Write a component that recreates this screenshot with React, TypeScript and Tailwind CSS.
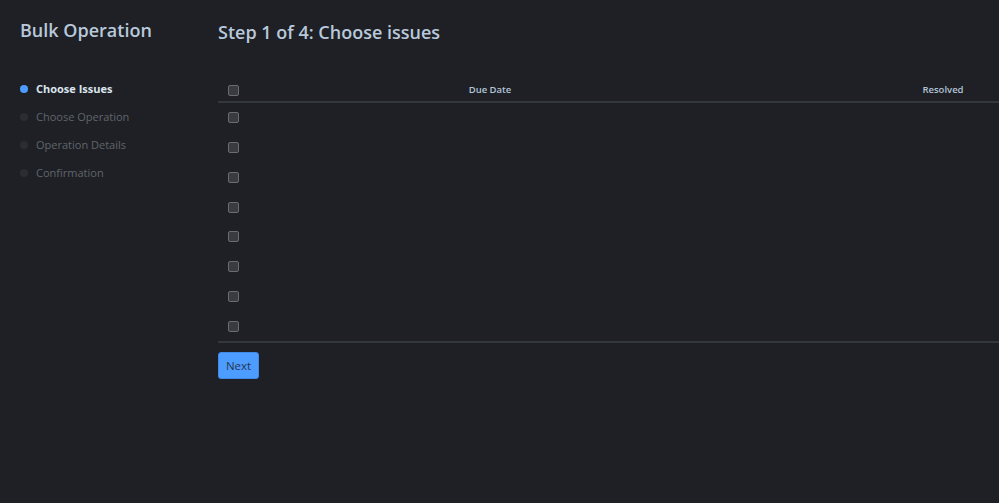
const steps = ["Choose Issues", "Choose Operation", "Operation Details", "Confirmation"];

function Checkbox() {
    return <span className="block h-[11px] w-[11px] rounded-[2px] border border-[#6a6c70] bg-[#3a3b3e]" />;
}

export default function App() {
    const rows = Array.from({ length: 8 }, (_, i) => i);

    return (
        <div
            className="flex h-[503px] w-[999px] overflow-hidden bg-[#1e2025] text-[#b9c8d8]"
            style={{ fontFamily: '"Open Sans", "Noto Sans", sans-serif' }}
        >
            <aside className="w-[218px] shrink-0 pl-5 pt-[16px]">
                <h1 className="text-[18px] font-semibold leading-[28px] text-[#b9c9db]">Bulk Operation</h1>
                <ul className="mt-[31px] flex flex-col">
                    {steps.map((step, i) => (
                        <li key={step} className="flex h-[28px] items-center">
                            <span
                                className={`mr-[8px] h-[8px] w-[8px] rounded-full ${
                                    i === 0 ? "bg-[#4d9cff]" : "bg-[#2a2d32]"
                                }`}
                            />
                            <span
                                className={`text-[11px] ${
                                    i === 0 ? "font-bold text-[#dde5ee]" : "text-[#60656c]"
                                }`}
                            >
                                {step}
                            </span>
                        </li>
                    ))}
                </ul>
            </aside>

            <main className="flex-1 pt-[18px]">
                <h2 className="text-[18px] font-semibold leading-[28px] text-[#b9c9db]">Step 1 of 4: Choose issues</h2>

                <div className="mt-[34px] w-[781px]">
                    <div className="flex h-[23px] items-center border-b-2 border-[#33383e] text-[9.5px] font-semibold text-[#b2c3d6]">
                        <div className="flex w-[30px] justify-center">
                            <Checkbox />
                        </div>
                        <div className="w-[484px] text-center">Due Date</div>
                        <div className="flex-1" />
                        <div className="w-[112px] text-center">Resolved</div>
                    </div>
                    {rows.map((r) => (
                        <div key={r} className="flex h-[29.75px] items-center">
                            <div className="flex w-[30px] justify-center">
                                <Checkbox />
                            </div>
                        </div>
                    ))}
                    <div className="h-[2px] bg-[#33383e]" />
                </div>

                <button className="mt-[9px] h-[27px] w-[41px] rounded-[3px] border border-[#3f8ae6] bg-[#4d9cff] text-[11.5px] text-[#263750]">
                    Next
                </button>
            </main>
        </div>
    );
}
